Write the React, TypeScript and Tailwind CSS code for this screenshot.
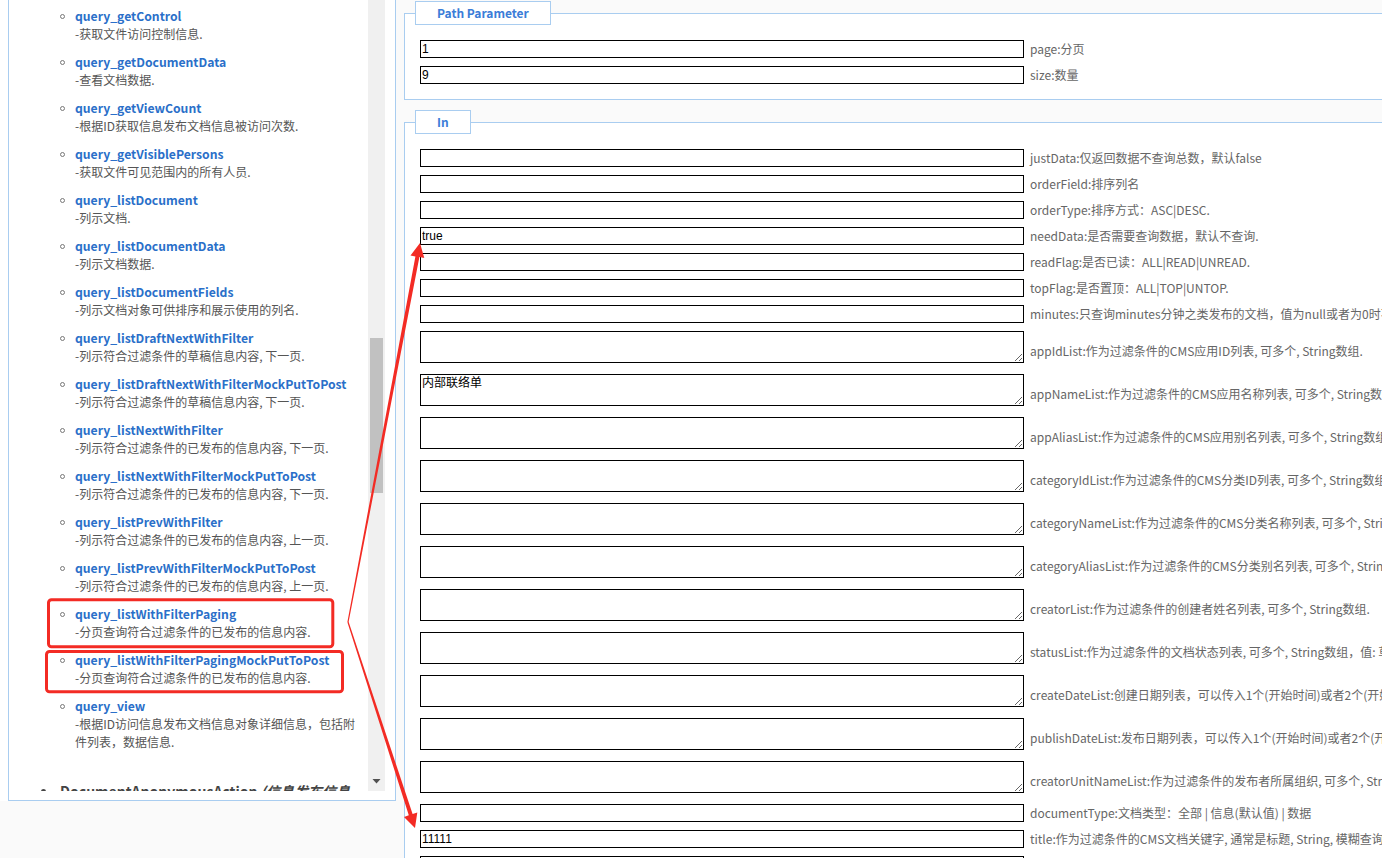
import React from "react";

const items: [string, string[]][] = [
  ["query_getControl", ["-获取文件访问控制信息."]],
  ["query_getDocumentData", ["-查看文档数据."]],
  ["query_getViewCount", ["-根据ID获取信息发布文档信息被访问次数."]],
  ["query_getVisiblePersons", ["-获取文件可见范围内的所有人员."]],
  ["query_listDocument", ["-列示文档."]],
  ["query_listDocumentData", ["-列示文档数据."]],
  ["query_listDocumentFields", ["-列示文档对象可供排序和展示使用的列名."]],
  ["query_listDraftNextWithFilter", ["-列示符合过滤条件的草稿信息内容, 下一页."]],
  ["query_listDraftNextWithFilterMockPutToPost", ["-列示符合过滤条件的草稿信息内容, 下一页."]],
  ["query_listNextWithFilter", ["-列示符合过滤条件的已发布的信息内容, 下一页."]],
  ["query_listNextWithFilterMockPutToPost", ["-列示符合过滤条件的已发布的信息内容, 下一页."]],
  ["query_listPrevWithFilter", ["-列示符合过滤条件的已发布的信息内容, 上一页."]],
  ["query_listPrevWithFilterMockPutToPost", ["-列示符合过滤条件的已发布的信息内容, 上一页."]],
  ["query_listWithFilterPaging", ["-分页查询符合过滤条件的已发布的信息内容."]],
  ["query_listWithFilterPagingMockPutToPost", ["-分页查询符合过滤条件的已发布的信息内容."]],
  ["query_view", ["-根据ID访问信息发布文档信息对象详细信息，包括附", "件列表，数据信息."]],
];

type Row = { kind: "input" | "textarea"; label: string; value?: string };

const inRows: Row[] = [
  { kind: "input", label: "justData:仅返回数据不查询总数，默认false" },
  { kind: "input", label: "orderField:排序列名" },
  { kind: "input", label: "orderType:排序方式：ASC|DESC." },
  { kind: "input", label: "needData:是否需要查询数据，默认不查询.", value: "true" },
  { kind: "input", label: "readFlag:是否已读：ALL|READ|UNREAD." },
  { kind: "input", label: "topFlag:是否置顶：ALL|TOP|UNTOP." },
  { kind: "input", label: "minutes:只查询minutes分钟之类发布的文档，值为null或者为0时不限制." },
  { kind: "textarea", label: "appIdList:作为过滤条件的CMS应用ID列表, 可多个, String数组." },
  { kind: "textarea", label: "appNameList:作为过滤条件的CMS应用名称列表, 可多个, String数组.", value: "内部联络单" },
  { kind: "textarea", label: "appAliasList:作为过滤条件的CMS应用别名列表, 可多个, String数组." },
  { kind: "textarea", label: "categoryIdList:作为过滤条件的CMS分类ID列表, 可多个, String数组." },
  { kind: "textarea", label: "categoryNameList:作为过滤条件的CMS分类名称列表, 可多个, String数组." },
  { kind: "textarea", label: "categoryAliasList:作为过滤条件的CMS分类别名列表, 可多个, String数组." },
  { kind: "textarea", label: "creatorList:作为过滤条件的创建者姓名列表, 可多个, String数组." },
  { kind: "textarea", label: "statusList:作为过滤条件的文档状态列表, 可多个, String数组，值: 草稿, 已发布, 已归档." },
  { kind: "textarea", label: "createDateList:创建日期列表，可以传入1个(开始时间)或者2个(开始和结束时间)." },
  { kind: "textarea", label: "publishDateList:发布日期列表，可以传入1个(开始时间)或者2个(开始和结束时间)." },
  { kind: "textarea", label: "creatorUnitNameList:作为过滤条件的发布者所属组织, 可多个, String数组." },
  { kind: "input", label: "documentType:文档类型：全部 | 信息(默认值) | 数据" },
  { kind: "input", label: "title:作为过滤条件的CMS文档关键字, 通常是标题, String, 模糊查询.", value: "11111" },
  { kind: "input", label: "importBatchName:作为过滤条件的数据导入批次文件名称, 可多个, String数组." },
];

function InputRow({ label, value }: { label: string; value?: string }) {
  return (
    <div className="mb-[8px] flex h-[18px] items-center">
      <input
        readOnly
        value={value ?? ""}
        className="h-[18px] w-[604px] shrink-0 border border-black bg-white px-[1px] font-['Liberation_Sans','Noto_Sans_CJK_SC',sans-serif] text-[12px] leading-[16px] text-black outline-none"
      />
      <span className="ml-[6px] whitespace-nowrap text-[12px] leading-[18px] text-[#666]">{label}</span>
    </div>
  );
}

function TextareaRow({ label, value }: { label: string; value?: string }) {
  return (
    <div className="mb-[11px] flex h-[32px] items-end">
      <textarea
        readOnly
        value={value ?? ""}
        className="block h-[32px] w-[604px] shrink-0 border border-black bg-white px-[1px] py-[1px] font-['Liberation_Sans','Noto_Sans_CJK_SC',sans-serif] text-[12px] leading-[14px] text-black outline-none"
      />
      <span className="mb-[4px] ml-[6px] whitespace-nowrap text-[12px] leading-[17px] text-[#666]">{label}</span>
    </div>
  );
}

function Legend({ children }: { children: React.ReactNode }) {
  return (
    <legend className="ml-[10px] h-[24px] border border-[#a9cdf0] bg-white px-[21px] text-[12px] font-bold leading-[22px] text-[#3b7dd8]">
      {children}
    </legend>
  );
}

export default function App() {
  return (
    <div className="relative flex h-[858px] w-[1382px] overflow-hidden bg-[#fafafa] font-['Noto_Sans_CJK_SC',sans-serif]">
      {/* left column */}
      <div className="h-[801px] w-[396px] shrink-0 bg-white pl-[8px]">
        <div className="flex h-full flex-col border-x border-b border-[#a9cdf0] pb-[9px] pr-[10px]">
          <div className="flex min-h-0 flex-1">
            <div className="min-w-0 flex-1 overflow-hidden pt-[7px]">
              <ul className="pl-[50px]">
                {items.map(([name, desc]) => (
                  <li key={name} className="mb-[10px] flex">
                    <div className="w-[16px] shrink-0 pl-[1px] pt-[7px]">
                      <div className="h-[5px] w-[5px] rounded-full border border-[#777]" />
                    </div>
                    <div className="whitespace-nowrap">
                      <div className="text-[12.2px] font-bold leading-[18px] text-[#2a6fc9]">{name}</div>
                      {desc.map((d) => (
                        <div key={d} className="text-[12px] leading-[18px] text-[#555]">
                          {d}
                        </div>
                      ))}
                    </div>
                  </li>
                ))}
              </ul>
              <div className="mt-[30px] flex pl-[32px]">
                <div className="w-[19px] shrink-0 pt-[8px]">
                  <div className="h-[5px] w-[5px] rounded-full bg-[#444]" />
                </div>
                <div className="whitespace-nowrap text-[14px] font-bold leading-[20px] text-[#444]">
                  DocumentAnonymousAction <span className="italic">(信息发布信息</span>
                  <br />
                  <span className="italic">匿名访问服务)</span>
                </div>
              </div>
            </div>
            <div className="relative w-[17px] shrink-0 bg-[#f0f0f0]">
              <div className="absolute left-[2px] top-[338px] h-[155px] w-[13px] bg-[#c1c1c1]" />
              <svg className="absolute bottom-[7px] left-[4px]" width="9" height="5" viewBox="0 0 9 5">
                <polygon points="0.5,0 8.5,0 4.5,4.5" fill="#505050" />
              </svg>
            </div>
          </div>
        </div>
      </div>

      {/* right column */}
      <div className="ml-[8px] w-[1100px] shrink-0 pt-[1px]">
        <fieldset className="border border-[#a9cdf0] bg-white">
          <Legend>Path Parameter</Legend>
          <div className="pb-[7px] pl-[15px] pt-[15px]">
            <InputRow label="page:分页" value="1" />
            <InputRow label="size:数量" value="9" />
          </div>
        </fieldset>
        <fieldset className="mt-[10px] border border-[#a9cdf0] bg-white">
          <Legend>In</Legend>
          <div className="pl-[15px] pt-[15px]">
            {inRows.map((r) =>
              r.kind === "input" ? (
                <InputRow key={r.label} label={r.label} value={r.value} />
              ) : (
                <TextareaRow key={r.label} label={r.label} value={r.value} />
              )
            )}
          </div>
        </fieldset>
      </div>

      {/* annotations */}
      <svg className="pointer-events-none absolute inset-0" width="1382" height="858" viewBox="0 0 1382 858">
        <rect x="48.5" y="599.8" width="284.3" height="47" rx="3" fill="none" stroke="#f32b24" strokeWidth="3" />
        <rect x="46.5" y="651.5" width="296" height="40.3" rx="3" fill="none" stroke="#f32b24" strokeWidth="3" />
        <polygon
          points="348.6,622.1 419.4,257.1 424.3,258.1 420,243 410.5,255.4 415.4,256.4 347.4,621.9"
          fill="#f32b24"
        />
        <polygon
          points="347.4,622.2 408.8,815.3 404.0,816.9 415,828 417.3,812.5 412.6,814.1 348.6,621.8"
          fill="#f32b24"
        />
      </svg>
    </div>
  );
}
